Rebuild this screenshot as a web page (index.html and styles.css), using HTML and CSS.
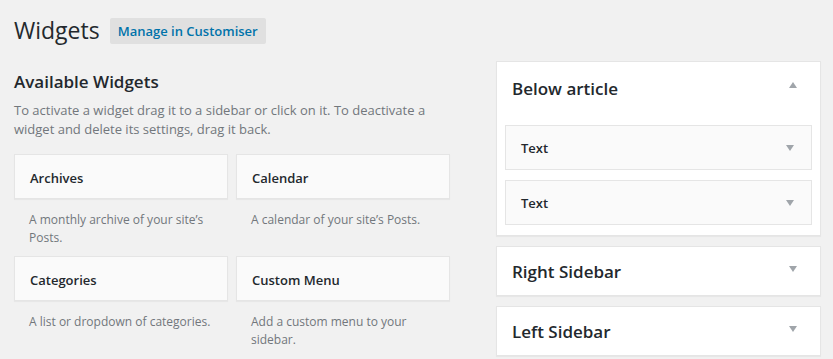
FILE: index.html
```html
<!DOCTYPE html>
<html lang="en">

<head>
    <meta charset="UTF-8">
    <meta name="viewport" content="width=device-width, initial-scale=1.0">
    <title>Widgets</title>
    <link rel="stylesheet" href="styles.css">
</head>

<body>
    <div class="wrap">
        <!-- Page title -->
        <div class="page-head">
            <h1>Widgets</h1>
            <a class="title-action" href="#">Manage in Customiser</a>
        </div>

        <div class="widgets-area">
            <!-- Available widgets -->
            <div class="available">
                <h2>Available Widgets</h2>
                <p class="intro">To activate a widget drag it to a sidebar or click on it. To deactivate a widget and delete its settings, drag it back.</p>

                <div class="widget-list">
                    <div class="widget-item">
                        <div class="widget-title">Archives</div>
                        <div class="widget-desc">A monthly archive of your site’s Posts.</div>
                    </div>
                    <div class="widget-item">
                        <div class="widget-title">Calendar</div>
                        <div class="widget-desc">A calendar of your site’s Posts.</div>
                    </div>
                    <div class="widget-item">
                        <div class="widget-title">Categories</div>
                        <div class="widget-desc">A list or dropdown of categories.</div>
                    </div>
                    <div class="widget-item">
                        <div class="widget-title">Custom Menu</div>
                        <div class="widget-desc">Add a custom menu to your sidebar.</div>
                    </div>
                </div>
            </div>

            <!-- Sidebars -->
            <div class="sidebars">
                <div class="sidebar open">
                    <div class="sidebar-name">
                        <h2>Below article</h2>
                        <span class="arrow up"></span>
                    </div>
                    <div class="sortables">
                        <div class="placed">
                            <span>Text</span>
                            <span class="arrow down"></span>
                        </div>
                        <div class="placed">
                            <span>Text</span>
                            <span class="arrow down"></span>
                        </div>
                    </div>
                </div>

                <div class="sidebar">
                    <div class="sidebar-name">
                        <h2>Right Sidebar</h2>
                        <span class="arrow down"></span>
                    </div>
                </div>

                <div class="sidebar">
                    <div class="sidebar-name">
                        <h2>Left Sidebar</h2>
                        <span class="arrow down"></span>
                    </div>
                </div>
            </div>
        </div>
    </div>
</body>

</html>
```

FILE: styles.css
```css
body {
    margin: 0;
    background-color: #f1f1f1;
    color: #23282d;
    font-family: "Open Sans", sans-serif;
    font-size: 13px;
    overflow: hidden;
}

.wrap {
    padding: 0 12px 0 14px;
}

.page-head {
    display: flex;
    align-items: center;
    gap: 10px;
    padding-top: 13px;
}

.page-head h1 {
    margin: 0;
    font-size: 23px;
    font-weight: 400;
    line-height: 34px;
}

.title-action {
    display: inline-block;
    padding: 0 8px;
    height: 26px;
    line-height: 26px;
    background-color: #e0e0e0;
    border-radius: 2px;
    color: #0073aa;
    font-size: 13px;
    font-weight: 600;
    text-decoration: none;
    margin-top: 2px;
}

.widgets-area {
    display: flex;
    justify-content: space-between;
    margin-top: 14px;
}

.available {
    width: 436px;
}

.available h2 {
    margin: 8px 0 0;
    font-size: 17px;
    font-weight: 600;
    line-height: 26px;
}

.intro {
    margin: 6px 0 0;
    color: #72777c;
    font-size: 13px;
    line-height: 19px;
}

.widget-list {
    display: grid;
    grid-template-columns: 1fr 1fr;
    column-gap: 8px;
    margin-top: 15px;
}

.widget-item {
    height: 102px;
}

.widget-title {
    height: 43px;
    line-height: 46px;
    overflow: hidden;
    padding: 0 15px;
    background-color: #fafafa;
    border: 1px solid #e5e5e5;
    box-shadow: 0 1px 1px rgba(0, 0, 0, 0.04);
    font-weight: 600;
}

.widget-desc {
    padding: 12px 15px 0 15px;
    color: #72777c;
    font-size: 12px;
    line-height: 18px;
}

.sidebars {
    width: 325px;
}

.sidebar {
    background-color: white;
    border: 1px solid #e5e5e5;
    box-shadow: 0 1px 1px rgba(0, 0, 0, 0.04);
    margin-bottom: 10px;
}

.sidebar-name {
    display: flex;
    justify-content: space-between;
    align-items: center;
    padding: 0 23px 0 15px;
    height: 48px;
}

.sidebar.open .sidebar-name {
    height: 52px;
}

.sidebar-name h2 {
    margin: 0;
    font-size: 17px;
    font-weight: 600;
}

.sortables {
    padding: 11px 8px 10px;
}

.placed {
    display: flex;
    justify-content: space-between;
    align-items: center;
    height: 43px;
    padding: 0 17px 0 15px;
    background-color: #fafafa;
    border: 1px solid #e5e5e5;
    font-weight: 600;
    margin-bottom: 10px;
}

.placed:last-child {
    margin-bottom: 0;
}

.arrow {
    width: 0;
    height: 0;
    border-left: 4px solid transparent;
    border-right: 4px solid transparent;
}

.arrow.down {
    border-top: 6px solid #a0a5aa;
}

.arrow.up {
    border-bottom: 6px solid #a0a5aa;
    margin-top: -6px;
}

.sidebar-name .arrow.down {
    margin-top: -4px;
}
```
